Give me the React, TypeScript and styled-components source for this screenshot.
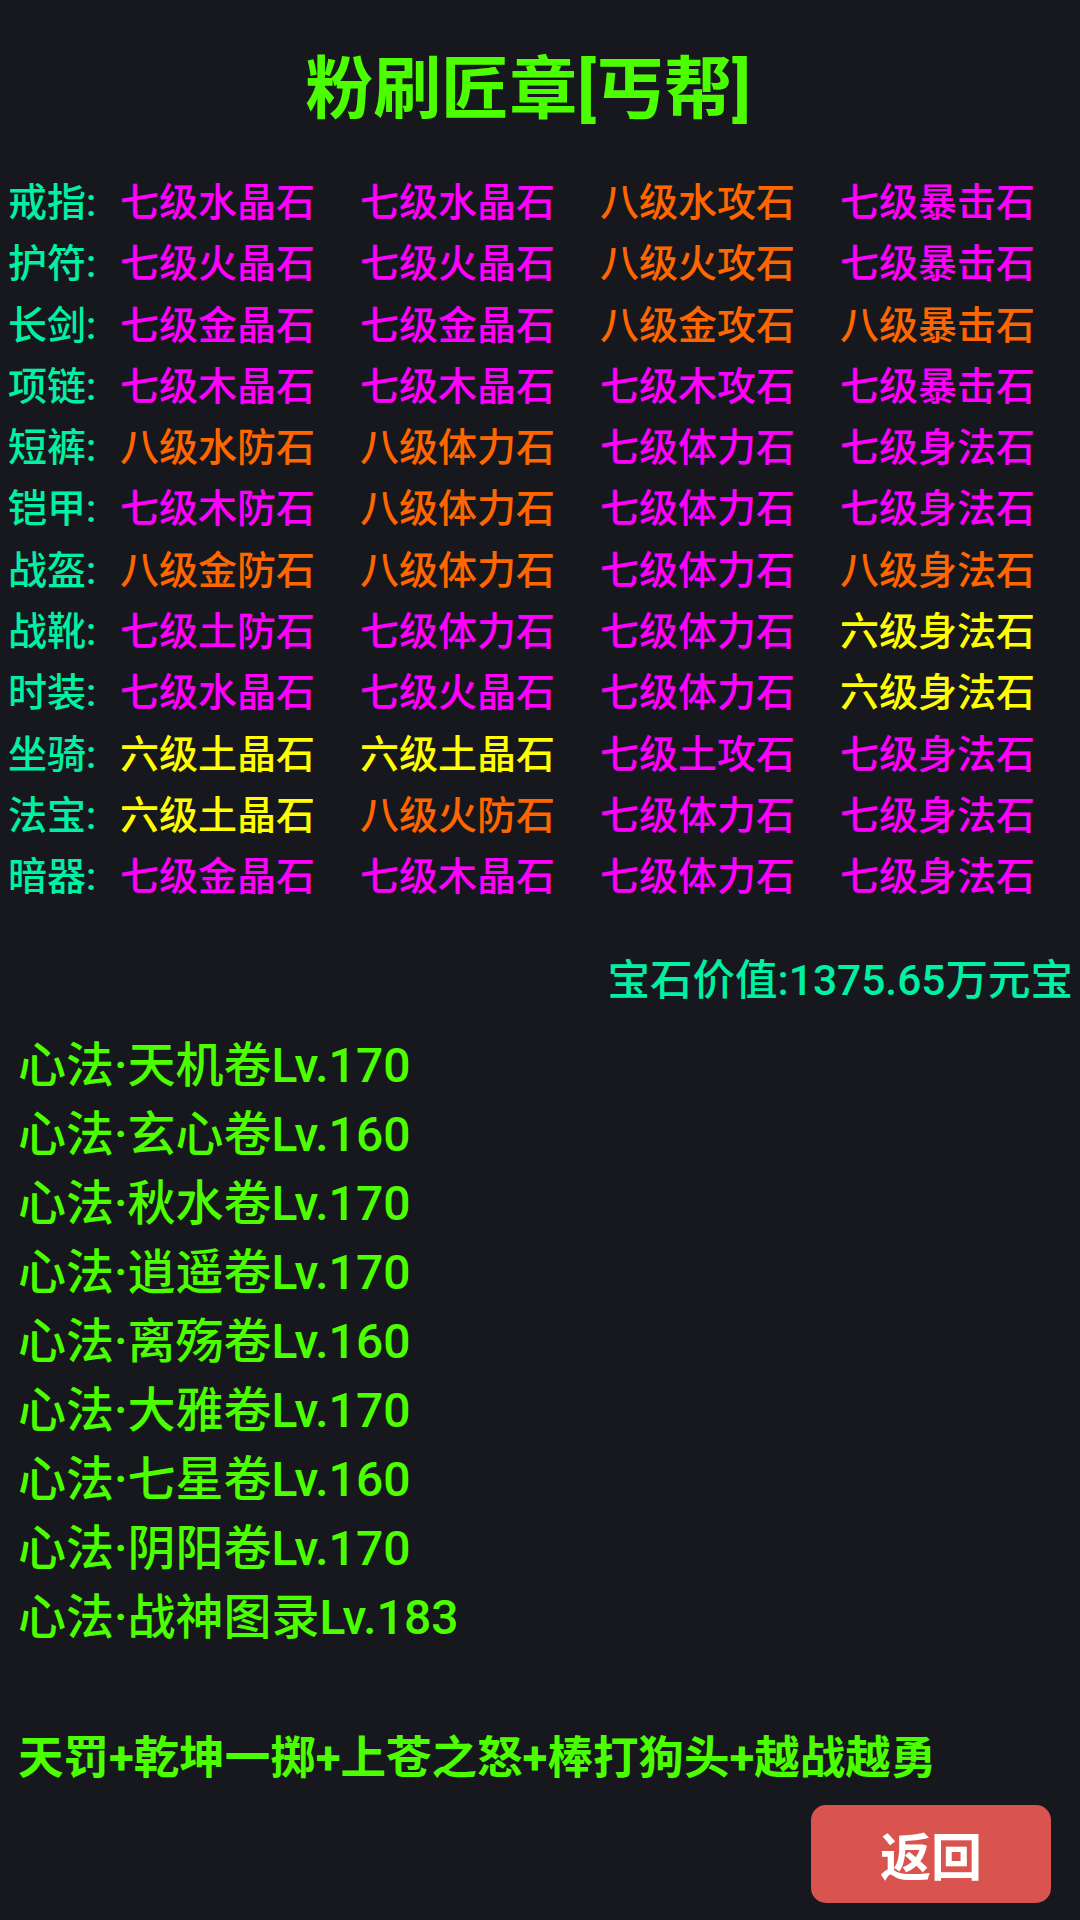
import React from 'react';
import styled, { createGlobalStyle } from 'styled-components';

const GlobalStyle = createGlobalStyle`
    html, body {
        margin: 0;
        padding: 0;
        background: #17181d;
    }
    body {
        font-family: Roboto, "Noto Sans CJK SC", sans-serif;
    }
`;

const Page = styled.div`
    width: 1080px;
    min-height: 1920px;
    box-sizing: border-box;
    padding: 49px 8px 0 8px;
    background: #17181d;
    display: flex;
    flex-direction: column;
`;

const Title = styled.h1`
    margin: 0;
    padding-right: 24px;
    font-size: 68px;
    line-height: 82px;
    font-weight: 700;
    color: #4cff00;
    text-align: center;
`;

const GemGrid = styled.div`
    margin-top: 42px;
    display: grid;
    grid-template-columns: 112px repeat(4, 240px);
    grid-auto-rows: 61.3px;
    font-size: 39px;
    line-height: 61.3px;
`;

const SlotLabel = styled.div`
    color: #00f0a4;
    font-weight: 500;
    white-space: nowrap;
`;

const Gem = styled.div<{ $color: string }>`
    color: ${({ $color }) => $color};
    font-weight: 500;
    white-space: nowrap;
`;

const GemValue = styled.div`
    margin-top: 41.5px;
    margin-right: -1px;
    text-align: right;
    font-size: 42.5px;
    line-height: 62px;
    font-weight: 500;
    color: #00f0a4;
`;

const XinfaList = styled.div`
    margin-top: 19px;
    padding-left: 10px;
    display: flex;
    flex-direction: column;
`;

const XinfaItem = styled.div`
    font-size: 48px;
    line-height: 69px;
    font-weight: 500;
    color: #4cff00;
    white-space: nowrap;
`;

const Skills = styled.div`
    margin-top: 73.5px;
    padding-left: 10px;
    font-size: 45.5px;
    line-height: 66px;
    font-weight: 700;
    color: #4cff00;
    white-space: nowrap;
`;

const Footer = styled.div`
    margin-top: 13px;
    padding-right: 21px;
    display: flex;
    justify-content: flex-end;
`;

const BackButton = styled.button`
    width: 240px;
    height: 98px;
    border: none;
    border-radius: 15px;
    background: #d9544f;
    color: #fff;
    font-family: Roboto, "Noto Sans CJK SC", sans-serif;
    font-size: 51px;
    font-weight: 700;
    cursor: pointer;
`;

const PINK = '#ff00ff';
const ORANGE = '#ff6600';
const YELLOW = '#ffff00';

// 颜色按等级: 六级黄, 七级粉, 八级橙
const levelColor = (name: string): string => {
    if (name.startsWith('八')) return ORANGE;
    if (name.startsWith('六')) return YELLOW;
    return PINK;
};

const slots: { label: string; gems: string[] }[] = [
    { label: '戒指', gems: ['七级水晶石', '七级水晶石', '八级水攻石', '七级暴击石'] },
    { label: '护符', gems: ['七级火晶石', '七级火晶石', '八级火攻石', '七级暴击石'] },
    { label: '长剑', gems: ['七级金晶石', '七级金晶石', '八级金攻石', '八级暴击石'] },
    { label: '项链', gems: ['七级木晶石', '七级木晶石', '七级木攻石', '七级暴击石'] },
    { label: '短裤', gems: ['八级水防石', '八级体力石', '七级体力石', '七级身法石'] },
    { label: '铠甲', gems: ['七级木防石', '八级体力石', '七级体力石', '七级身法石'] },
    { label: '战盔', gems: ['八级金防石', '八级体力石', '七级体力石', '八级身法石'] },
    { label: '战靴', gems: ['七级土防石', '七级体力石', '七级体力石', '六级身法石'] },
    { label: '时装', gems: ['七级水晶石', '七级火晶石', '七级体力石', '六级身法石'] },
    { label: '坐骑', gems: ['六级土晶石', '六级土晶石', '七级土攻石', '七级身法石'] },
    { label: '法宝', gems: ['六级土晶石', '八级火防石', '七级体力石', '七级身法石'] },
    { label: '暗器', gems: ['七级金晶石', '七级木晶石', '七级体力石', '七级身法石'] },
];

const xinfa = [
    '心法·天机卷Lv.170',
    '心法·玄心卷Lv.160',
    '心法·秋水卷Lv.170',
    '心法·逍遥卷Lv.170',
    '心法·离殇卷Lv.160',
    '心法·大雅卷Lv.170',
    '心法·七星卷Lv.160',
    '心法·阴阳卷Lv.170',
    '心法·战神图录Lv.183',
];

const App: React.FC = () => {
    return (
        <>
            <GlobalStyle />
            <Page>
                <Title>粉刷匠章[丐帮]</Title>

                <GemGrid>
                    {slots.map(slot => (
                        <React.Fragment key={slot.label}>
                            <SlotLabel>{slot.label}:</SlotLabel>
                            {slot.gems.map((gem, i) => (
                                <Gem key={i} $color={levelColor(gem)}>{gem}</Gem>
                            ))}
                        </React.Fragment>
                    ))}
                </GemGrid>

                <GemValue>宝石价值:1375.65万元宝</GemValue>

                <XinfaList>
                    {xinfa.map(item => (
                        <XinfaItem key={item}>{item}</XinfaItem>
                    ))}
                </XinfaList>

                <Skills>天罚+乾坤一掷+上苍之怒+棒打狗头+越战越勇</Skills>

                <Footer>
                    <BackButton>返回</BackButton>
                </Footer>
            </Page>
        </>
    );
};

export default App;
